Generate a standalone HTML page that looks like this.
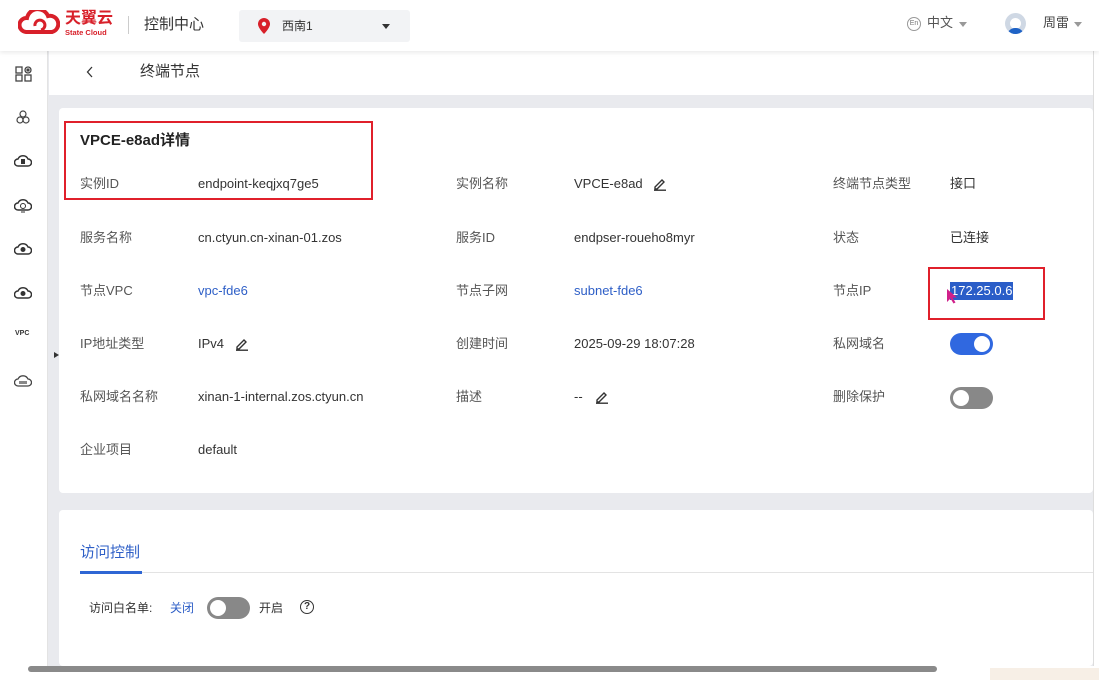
<!DOCTYPE html>
<html><head><meta charset="utf-8"><style>
*{margin:0;padding:0;box-sizing:border-box}
body{width:1099px;height:680px;overflow:hidden;background:#e9eaee;font-family:"Liberation Sans","Noto Sans CJK SC",sans-serif;font-size:13px;color:#333;position:relative}
.abs{position:absolute}
.hdr{left:0;top:0;width:1099px;height:51px;background:#fff;box-shadow:0 2px 4px rgba(0,0,0,.08);z-index:3}
.side{left:0;top:51px;width:48px;height:615px;background:#fff;border-right:1px solid #e3e3e3;z-index:2}
.crumb{left:49px;top:51px;width:1044px;height:44px;background:#fff}
.card{background:#fff;border-radius:4px}
.lbl,.val{font-size:13px;line-height:16px;height:16px}
.lbl{color:#555}
.val{color:#333}
.link{color:#2e5fc7}
.tog{width:43px;height:22px;border-radius:11px}
.tog i{position:absolute;top:3px;width:16px;height:16px;border-radius:50%;background:#fff}
</style></head><body>
<div class="abs hdr">
 <svg class="abs" style="left:18px;top:10px" width="42" height="26" viewBox="0 0 42 26"><path d="M8 22 A7 7 0 0 1 9 8 A11 11 0 0 1 30 6 A8 8 0 0 1 34 22 Z" fill="none" stroke="#d8202a" stroke-width="4"/><path d="M17 16 a5 5 0 1 1 6 4" fill="none" stroke="#d8202a" stroke-width="3"/></svg>
 <div class="abs" style="left:65px;top:10px;color:#d8202a;font-weight:bold;font-size:16px;line-height:18px">天翼云</div>
 <div class="abs" style="left:65px;top:28px;color:#d8202a;font-weight:bold;font-size:7.5px">State Cloud</div>
 <div class="abs" style="left:128px;top:16px;width:1px;height:18px;background:#ccc"></div>
 <div class="abs" style="left:144px;top:15px;font-size:15px;line-height:20px;color:#333">控制中心</div>
 <div class="abs" style="left:239px;top:10px;width:171px;height:32px;background:#f2f3f5;border-radius:3px">
  <svg class="abs" style="left:19px;top:8px" width="12" height="16" viewBox="0 0 12 16"><path d="M6 0a6 6 0 0 1 6 6c0 4-6 10-6 10S0 10 0 6a6 6 0 0 1 6-6z" fill="#d8202a"/><circle cx="6" cy="6" r="2.2" fill="#f2f3f5"/></svg>
  <span class="abs" style="left:43px;top:8px;font-size:12px;line-height:16px">西南1</span>
  <span class="abs" style="left:143px;top:14px;border:4px solid transparent;border-top:5px solid #333"></span>
 </div>
 <div class="abs" style="left:907px;top:17px;width:14px;height:14px;border:1px solid #999;border-radius:50%;font-size:7px;line-height:12px;text-align:center;color:#777">En</div>
 <span class="abs" style="left:927px;top:15px;line-height:16px;color:#555">中文</span>
 <span class="abs" style="left:959px;top:22px;border:4px solid transparent;border-top:5px solid #999"></span>
 <div class="abs" style="left:1005px;top:13px;width:21px;height:21px;border-radius:50%;background:#cfd8e4;overflow:hidden"><div style="margin:5px auto 0;width:11px;height:11px;border-radius:50%;background:#fff"></div><div style="margin:-1px auto 0;width:17px;height:8px;border-radius:8px 8px 0 0;background:#1f63c6"></div></div>
 <span class="abs" style="left:1043px;top:15px;line-height:16px;color:#444">周雷</span>
 <span class="abs" style="left:1074px;top:22px;border:4px solid transparent;border-top:5px solid #999"></span>
</div>
<div class="abs side">
 <svg class="abs" style="left:15px;top:15px" width="18" height="16" viewBox="0 0 18 16" fill="none" stroke="#444" stroke-width="1.3"><rect x="1" y="1" width="6" height="6"/><rect x="1" y="9" width="6" height="6"/><rect x="10" y="9" width="6" height="6"/><circle cx="13" cy="4" r="3"/><circle cx="13" cy="4" r="1" fill="#444"/></svg>
 <svg class="abs" style="left:16px;top:59px" width="14" height="14" viewBox="0 0 14 14" fill="none" stroke="#444" stroke-width="1.2"><circle cx="7" cy="4" r="3"/><circle cx="4" cy="10" r="3"/><circle cx="10" cy="10" r="3"/></svg>
 <svg class="abs" style="left:14px;top:102px" width="18" height="14" viewBox="0 0 18 14"><path d="M4 13a3.5 3.5 0 0 1 0-7 5.5 5.5 0 0 1 10 0 3.5 3.5 0 0 1 0 7z" fill="none" stroke="#333" stroke-width="1.5"/><rect x="7" y="6" width="4" height="5" fill="#333"/></svg>
 <svg class="abs" style="left:14px;top:146px" width="18" height="16" viewBox="0 0 18 16"><path d="M4 13a3.5 3.5 0 0 1 0-7 5.5 5.5 0 0 1 10 0 3.5 3.5 0 0 1 0 7z" fill="none" stroke="#333" stroke-width="1.5"/><circle cx="9" cy="9" r="2.5" fill="none" stroke="#333"/><path d="M7 15h4" stroke="#333"/></svg>
 <svg class="abs" style="left:14px;top:190px" width="18" height="14" viewBox="0 0 18 14"><path d="M4 13a3.5 3.5 0 0 1 0-7 5.5 5.5 0 0 1 10 0 3.5 3.5 0 0 1 0 7z" fill="none" stroke="#333" stroke-width="1.5"/><circle cx="9" cy="8.5" r="2.5" fill="#333"/></svg>
 <svg class="abs" style="left:14px;top:234px" width="18" height="14" viewBox="0 0 18 14"><path d="M4 13a3.5 3.5 0 0 1 0-7 5.5 5.5 0 0 1 10 0 3.5 3.5 0 0 1 0 7z" fill="none" stroke="#333" stroke-width="1.5"/><circle cx="9" cy="8.5" r="2.5" fill="#333"/></svg>
 <div class="abs" style="left:15px;top:279px;font-size:7px;color:#333;font-weight:bold">VPC</div>
 <svg class="abs" style="left:14px;top:322px" width="18" height="14" viewBox="0 0 18 14"><path d="M4 13a3.5 3.5 0 0 1 0-7 5.5 5.5 0 0 1 10 0 3.5 3.5 0 0 1 0 7z" fill="none" stroke="#444" stroke-width="1.3"/><rect x="5" y="8" width="8" height="3" fill="#888"/></svg>
</div>
<span class="abs" style="left:54px;top:352px;border:3px solid transparent;border-left:5px solid #333;z-index:4"></span>
<div class="abs crumb">
 <svg class="abs" style="left:37px;top:14px" width="8" height="14" viewBox="0 0 8 14"><path d="M6 2L1.5 7 6 12" fill="none" stroke="#333" stroke-width="1.3"/></svg>
 <span class="abs" style="left:91px;top:11px;font-size:15px;line-height:20px;color:#333">终端节点</span>
</div>
<div class="abs card" style="left:59px;top:108px;width:1034px;height:385px">
 <div class="abs" style="left:21px;top:23px;font-size:15px;line-height:20px;font-weight:bold;color:#222">VPCE-e8ad详情</div>
 <div class="abs" style="left:5px;top:13px;width:309px;height:79px;border:2px solid #e0202b"></div>
 <div class="abs" style="left:869px;top:159px;width:117px;height:53px;border:2px solid #e0202b"></div>
</div>
<div class="abs" style="left:1093px;top:51px;width:6px;height:615px;background:#fff;border-left:1px solid #ddd"></div>

<div class="abs lbl" style="left:80px;top:176px">实例ID</div><div class="abs val" style="left:198px;top:176px">endpoint-keqjxq7ge5</div>
<div class="abs lbl" style="left:456px;top:176px">实例名称</div><div class="abs val" style="left:574px;top:176px">VPCE-e8ad</div>
<div class="abs lbl" style="left:833px;top:176px">终端节点类型</div><div class="abs val" style="left:950px;top:176px">接口</div>
<div class="abs lbl" style="left:80px;top:230px">服务名称</div><div class="abs val" style="left:198px;top:230px">cn.ctyun.cn-xinan-01.zos</div>
<div class="abs lbl" style="left:456px;top:230px">服务ID</div><div class="abs val" style="left:574px;top:230px">endpser-roueho8myr</div>
<div class="abs lbl" style="left:833px;top:230px">状态</div><div class="abs val" style="left:950px;top:230px">已连接</div>
<div class="abs lbl" style="left:80px;top:283px">节点VPC</div><div class="abs val link" style="left:198px;top:283px">vpc-fde6</div>
<div class="abs lbl" style="left:456px;top:283px">节点子网</div><div class="abs val link" style="left:574px;top:283px">subnet-fde6</div>
<div class="abs lbl" style="left:833px;top:283px">节点IP</div><div class="abs val" style="left:950px;top:282px;height:18px;line-height:18px;background:#2a5dc8;color:#fff;padding:0 1px">172.25.0.6</div>
<div class="abs lbl" style="left:80px;top:336px">IP地址类型</div><div class="abs val" style="left:198px;top:336px">IPv4</div>
<div class="abs lbl" style="left:456px;top:336px">创建时间</div><div class="abs val" style="left:574px;top:336px">2025-09-29 18:07:28</div>
<div class="abs lbl" style="left:833px;top:336px">私网域名</div>
<div class="abs lbl" style="left:80px;top:389px">私网域名名称</div><div class="abs val" style="left:198px;top:389px">xinan-1-internal.zos.ctyun.cn</div>
<div class="abs lbl" style="left:456px;top:389px">描述</div><div class="abs val" style="left:574px;top:389px">--</div>
<div class="abs lbl" style="left:833px;top:389px">删除保护</div>
<div class="abs lbl" style="left:80px;top:442px">企业项目</div><div class="abs val" style="left:198px;top:442px">default</div>
<svg class="abs" style="left:653px;top:177px" width="14" height="14" viewBox="0 0 14 14"><path d="M2 10L9 3l2 2-7 7H2z" fill="none" stroke="#333" stroke-width="1.4"/><path d="M1 13.2h12" stroke="#333" stroke-width="1.4"/></svg>
<svg class="abs" style="left:235px;top:337px" width="14" height="14" viewBox="0 0 14 14"><path d="M2 10L9 3l2 2-7 7H2z" fill="none" stroke="#333" stroke-width="1.4"/><path d="M1 13.2h12" stroke="#333" stroke-width="1.4"/></svg>
<svg class="abs" style="left:595px;top:390px" width="14" height="14" viewBox="0 0 14 14"><path d="M2 10L9 3l2 2-7 7H2z" fill="none" stroke="#333" stroke-width="1.4"/><path d="M1 13.2h12" stroke="#333" stroke-width="1.4"/></svg>
<svg class="abs" style="left:946px;top:288px" width="12" height="16" viewBox="0 0 12 16"><path d="M1 1v13l3.5-3.5 3 5 2-1-3-5H11z" fill="#d0208a"/></svg>
<div class="abs tog" style="left:950px;top:333px;background:#3068e0"><i style="left:24px"></i></div>
<div class="abs tog" style="left:950px;top:387px;background:#888"><i style="left:3px"></i></div>

<div class="abs card" style="left:59px;top:510px;width:1034px;height:156px">
 <div class="abs" style="left:21px;top:33px;font-size:15px;line-height:20px;color:#2e5fc7">访问控制</div>
 <div class="abs" style="left:21px;top:62px;width:1013px;height:1px;background:#e3e3e3"></div>
 <div class="abs" style="left:21px;top:61px;width:62px;height:3px;background:#2e66d4"></div>
 <div class="abs" style="left:30px;top:90px;font-size:12px;line-height:16px;color:#333">访问白名单:</div>
 <div class="abs" style="left:111px;top:90px;font-size:12px;line-height:16px;color:#2e5fc7">关闭</div>
 <div class="abs tog" style="left:148px;top:87px;background:#888"><i style="left:3px"></i></div>
 <div class="abs" style="left:200px;top:90px;font-size:12px;line-height:16px">开启</div>
 <div class="abs" style="left:241px;top:90px;width:14px;height:14px;border:1.5px solid #333;border-radius:50%;font-size:10px;line-height:11px;text-align:center;font-weight:bold">?</div>
</div>
<div class="abs" style="left:0;top:666px;width:1099px;height:14px;background:#fff"></div>
<div class="abs" style="left:28px;top:666px;width:909px;height:6px;background:#8a8a8a;border-radius:3px"></div>
<div class="abs" style="left:990px;top:668px;width:109px;height:12px;background:#f7efe6"></div>
</body></html>
